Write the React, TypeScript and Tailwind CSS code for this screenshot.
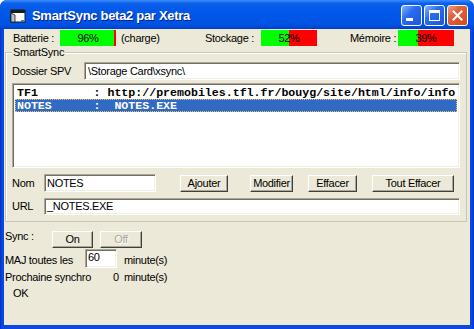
import React from 'react';

const sunken =
  'border border-t-[#ACA899] border-l-[#ACA899] border-b-white border-r-white shadow-[inset_1px_1px_0_#716F64,inset_-1px_-1px_0_#F1EFE2] bg-white';
const raised =
  'border border-t-white border-l-white border-b-[#404040] border-r-[#404040] shadow-[inset_-1px_-1px_0_#ACA899] bg-[#ECE9D8] flex items-center justify-center';

const Gauge: React.FC<{ pct: string; green: number; red: number }> = ({ pct, green, red }) => (
  <div className="relative flex h-[16px] w-[56px]">
    <div className="bg-[#00FF00]" style={{ width: green }} />
    <div className="bg-[#FF0000]" style={{ width: red }} />
    <span className="absolute inset-0 flex items-center justify-center text-black">{pct}</span>
  </div>
);

const Btn: React.FC<{ label: string; w: string; disabled?: boolean }> = ({ label, w, disabled }) => (
  <div className={`${raised} ${w} h-[17px]`}>
    <span className={disabled ? 'text-[#ACA899] [text-shadow:1px_1px_0_#fff]' : 'text-black'}>{label}</span>
  </div>
);

const TitleButton: React.FC<{ kind: 'min' | 'max' | 'close' }> = ({ kind }) => {
  const bg =
    kind === 'close'
      ? 'bg-[linear-gradient(135deg,#F0A08A_0%,#E2643C_35%,#D2491F_100%)]'
      : 'bg-[linear-gradient(135deg,#8AB4FF_0%,#2A6BF0_40%,#1A55E0_100%)]';
  return (
    <div className={`w-[21px] h-[21px] rounded-[3px] border border-white ${bg} flex items-center justify-center`}>
      {kind === 'min' && <div className="w-[7px] h-[3px] bg-white mt-[8px] mr-[4px]" />}
      {kind === 'max' && <div className="w-[11px] h-[11px] border border-white border-t-[3px]" />}
      {kind === 'close' && (
        <svg width="11" height="11" viewBox="0 0 11 11">
          <path d="M1.5 1.5 L9.5 9.5 M9.5 1.5 L1.5 9.5" stroke="white" strokeWidth="2" strokeLinecap="square" />
        </svg>
      )}
    </div>
  );
};

export default function App() {
  return (
    <div className="w-[474px] h-[329px] bg-white font-['Liberation_Sans',Arial,sans-serif] text-[11px] tracking-[-0.3px] leading-[13px] text-black">
      <div className="w-full h-full flex flex-col rounded-t-[7px] overflow-hidden bg-[linear-gradient(90deg,#0030C8_0%,#0A48E0_2px,#0A48E0_calc(100%-2px),#0030C8_100%)]">
        {/* title bar */}
        <div className="h-[29px] pt-[2px] flex items-center bg-[linear-gradient(180deg,#3C8CFF_0%,#0A5FEA_12%,#0058E8_45%,#0052E2_85%,#0040CC_100%)]">
          <svg className="ml-[10px]" width="16" height="16" viewBox="0 0 16 16">
            <rect x="1" y="2" width="14" height="12" fill="#fff" stroke="#1a1a1a" />
            <rect x="1" y="2" width="14" height="3" fill="#1a1a1a" />
            <path d="M1 5 L5 7 L5 14 L1 14 Z" fill="#b8c4c8" stroke="#1a1a1a" strokeWidth="0.8" />
            <rect x="11" y="12" width="3" height="2" fill="#3a8a7a" />
          </svg>
          <span className="ml-[6px] text-white font-bold text-[13px] tracking-[-0.3px] leading-[16px] [text-shadow:1px_1px_0_#0A1E8C]">
            SmartSync beta2 par Xetra
          </span>
          <div className="ml-auto mr-[6px] flex gap-[2px]">
            <TitleButton kind="min" />
            <TitleButton kind="max" />
            <TitleButton kind="close" />
          </div>
        </div>

        {/* client area */}
        <div className="flex-1 mx-[4px] mb-[4px] bg-[#ECE9D8] flex flex-col">
          {/* status line */}
          <div className="mt-[1px] h-[16px] pl-[9px] flex items-center">
            <span className="w-[47px]">Batterie :</span>
            <Gauge pct="96%" green={54} red={2} />
            <span className="ml-[5px] w-[84px]">(charge)</span>
            <span className="w-[56px]">Stockage :</span>
            <Gauge pct="52%" green={28} red={28} />
            <span className="ml-[33px] w-[48px]">Mémoire :</span>
            <Gauge pct="39%" green={20} red={36} />
          </div>

          {/* group box */}
          <div className="relative mt-[6px] ml-[1px] mr-[3px] border border-[#C8C6B8] shadow-[inset_1px_1px_0_#fff] pt-[9px] px-[6px] pb-[6px]">
            <span className="absolute -top-[7px] left-[6px] px-[1px] bg-[#ECE9D8]">SmartSync</span>

            <div className="h-[18px] flex items-center">
              <span className="w-[72px]">Dossier SPV</span>
              <div className={`${sunken} flex-1 h-full pl-[3px] flex items-center`}>\Storage Card\xsync\</div>
            </div>

            <div className={`${sunken} mt-[3px] h-[85px] p-[2px] font-['Liberation_Mono','Courier_New',monospace] font-bold text-[11.6px] tracking-normal whitespace-pre`}>
              <div className="h-[13px] pl-[2px] leading-[13px]">{'TF1        : http://premobiles.tfl.fr/bouyg/site/html/info/info'}</div>
              <div className="h-[13px] pl-[1px] leading-[11px] bg-[#316AC5] text-white border border-dotted border-[#E8C35A]">
                {'NOTES      :  NOTES.EXE'}
              </div>
            </div>

            <div className="mt-[6px] h-[18px] flex items-center">
              <span className="w-[32px]">Nom</span>
              <div className={`${sunken} w-[112px] h-[18px] pl-[2px] flex items-center`}>NOTES</div>
              <div className="ml-[24px]">
                <Btn label="Ajouter" w="w-[48px]" />
              </div>
              <div className="ml-[22px]">
                <Btn label="Modifier" w="w-[43px]" />
              </div>
              <div className="ml-[15px]">
                <Btn label="Effacer" w="w-[49px]" />
              </div>
              <div className="ml-[15px]">
                <Btn label="Tout Effacer" w="w-[82px]" />
              </div>
            </div>

            <div className="mt-[6px] h-[17px] flex items-center">
              <span className="w-[32px]">URL</span>
              <div className={`${sunken} flex-1 h-full pl-[2px] flex items-center`}>_NOTES.EXE</div>
            </div>
          </div>

          {/* sync controls */}
          <div className="pl-[1px] flex flex-col">
            <div className="mt-[9px] h-[16px] flex items-start">
              <span className="w-[47px] -mt-[1px]">Sync :</span>
              <Btn label="On" w="w-[41px]" />
              <div className="ml-[7px]">
                <Btn label="Off" w="w-[42px]" disabled />
              </div>
            </div>
            <div className="mt-[2px] h-[19px] flex">
              <span className="w-[80px] shrink-0 whitespace-nowrap pt-[5px]">MAJ toutes les</span>
              <div className={`${sunken} w-[32px] h-[19px] pl-[2px] pt-[1px]`}>60</div>
              <span className="ml-[7px] whitespace-nowrap pt-[5px]">minute(s)</span>
            </div>
            <div className="mt-[3px] h-[13px] flex whitespace-nowrap">
              <span className="w-[108px]">Prochaine synchro</span>
              <span className="w-[11px]">0</span>
              <span>minute(s)</span>
            </div>
            <div className="mt-[3px] ml-[8px] h-[13px]">OK</div>
          </div>
        </div>
      </div>
    </div>
  );
}
